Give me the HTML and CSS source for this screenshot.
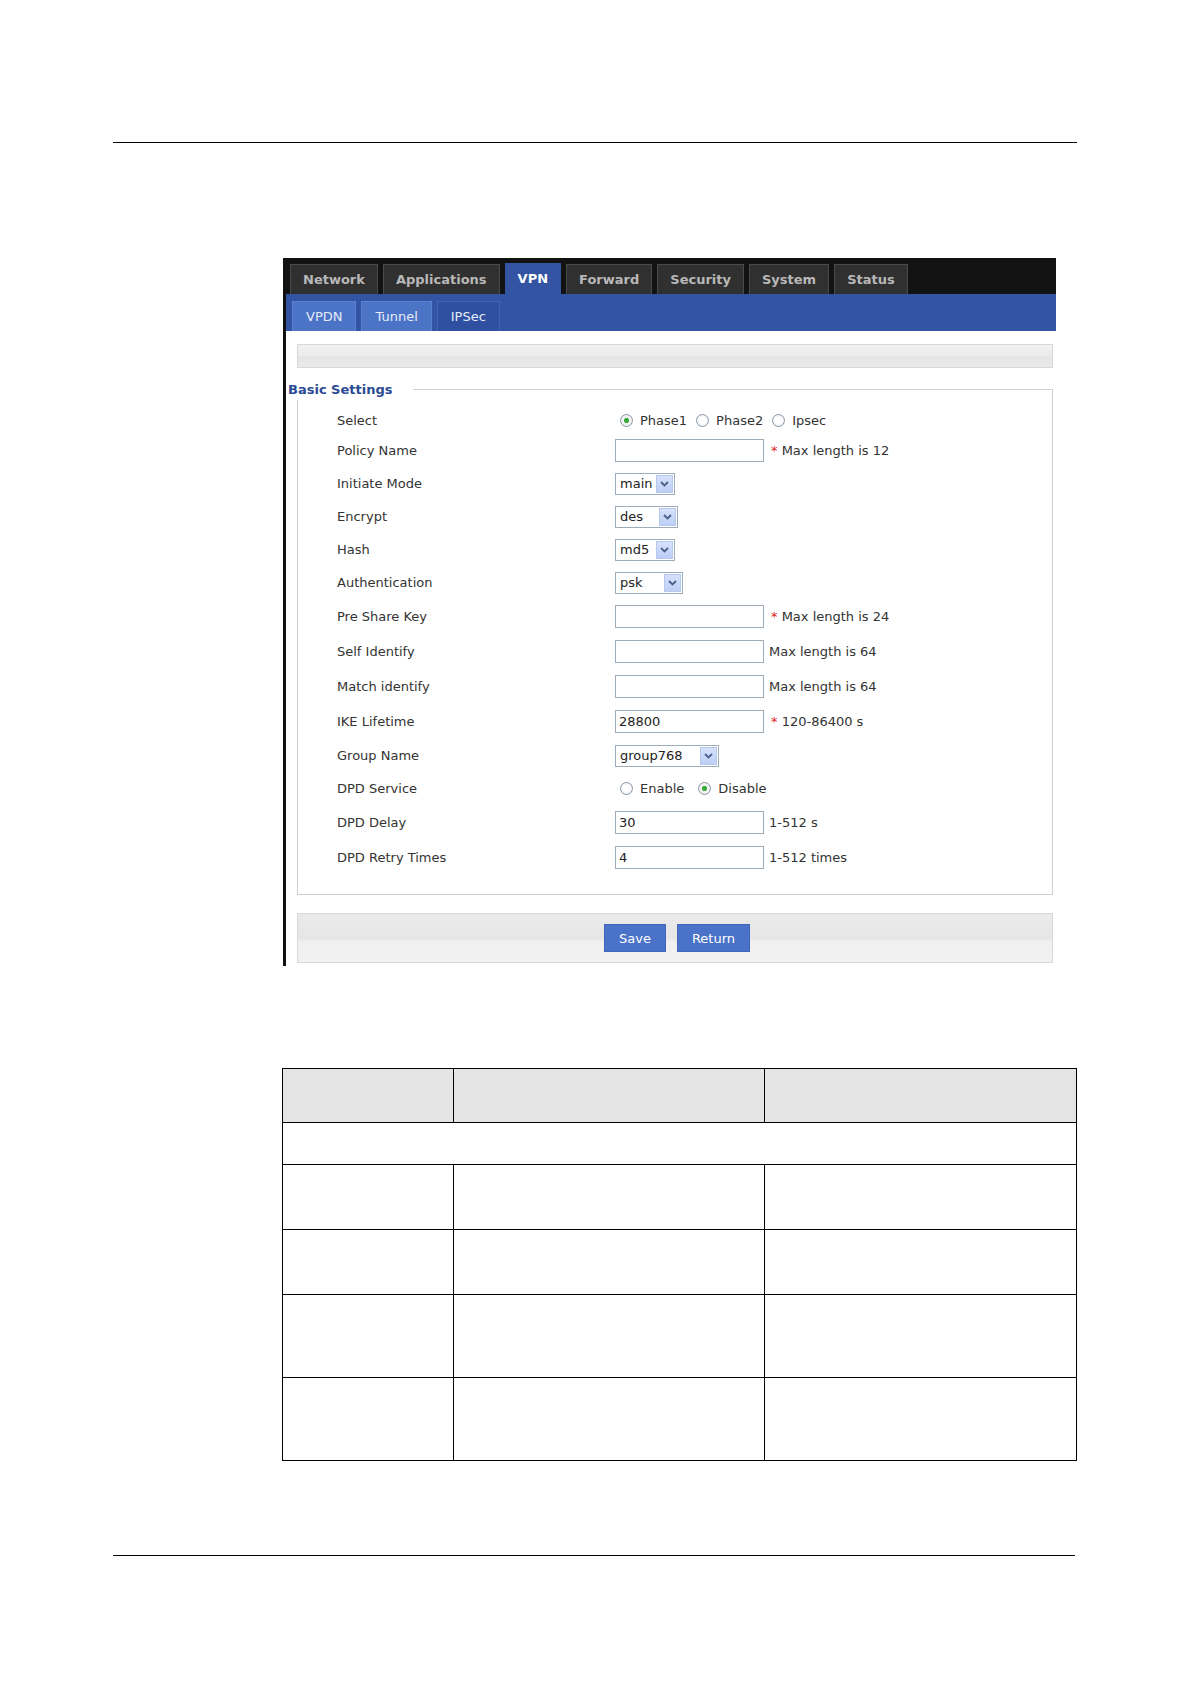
FILE: index.html
```html
<!DOCTYPE html>
<html lang="en">
<head>
  <meta charset="UTF-8">
  <title>IPSec Phase1 – Basic Settings</title>
  <link rel="stylesheet" href="styles.css">
</head>
<body>
  <div class="page">
    <div class="rule"></div>

    <div class="panel">
      <div class="topnav">
        <span class="tab">Network</span>
        <span class="tab">Applications</span>
        <span class="tab active">VPN</span>
        <span class="tab">Forward</span>
        <span class="tab">Security</span>
        <span class="tab">System</span>
        <span class="tab">Status</span>
      </div>
      <div class="subnav">
        <span class="subtab">VPDN</span>
        <span class="subtab">Tunnel</span>
        <span class="subtab active">IPSec</span>
      </div>

      <div class="content">
        <div class="bar"></div>

        <div class="fs">
          <div class="fs-head">
            <span class="fs-title">Basic Settings</span>
            <span class="fs-line"></span>
          </div>
          <div class="fs-body">
            <div class="row first">
              <span class="label">Select</span>
              <span class="ctrl">
                <label class="opt"><span class="radio on"></span>Phase1</label>
                <label class="opt"><span class="radio"></span>Phase2</label>
                <label class="opt"><span class="radio"></span>Ipsec</label>
              </span>
            </div>
            <div class="row short">
              <span class="label">Policy Name</span>
              <span class="ctrl">
                <span class="input"></span>
                <span class="hint"><span class="req">*</span> Max length is 12</span>
              </span>
            </div>
            <div class="row short">
              <span class="label">Initiate Mode</span>
              <span class="ctrl">
                <span class="select w60"><span class="val">main</span><span class="drop"><svg width="9" height="6" viewBox="0 0 9 6"><path d="M1 1l3.5 3.5L8 1" fill="none" stroke="#4a5f8a" stroke-width="1.8"/></svg></span></span>
              </span>
            </div>
            <div class="row short">
              <span class="label">Encrypt</span>
              <span class="ctrl">
                <span class="select w63"><span class="val">des</span><span class="drop"><svg width="9" height="6" viewBox="0 0 9 6"><path d="M1 1l3.5 3.5L8 1" fill="none" stroke="#4a5f8a" stroke-width="1.8"/></svg></span></span>
              </span>
            </div>
            <div class="row short">
              <span class="label">Hash</span>
              <span class="ctrl">
                <span class="select w60"><span class="val">md5</span><span class="drop"><svg width="9" height="6" viewBox="0 0 9 6"><path d="M1 1l3.5 3.5L8 1" fill="none" stroke="#4a5f8a" stroke-width="1.8"/></svg></span></span>
              </span>
            </div>
            <div class="row short">
              <span class="label">Authentication</span>
              <span class="ctrl">
                <span class="select w68"><span class="val">psk</span><span class="drop"><svg width="9" height="6" viewBox="0 0 9 6"><path d="M1 1l3.5 3.5L8 1" fill="none" stroke="#4a5f8a" stroke-width="1.8"/></svg></span></span>
              </span>
            </div>
            <div class="row">
              <span class="label">Pre Share Key</span>
              <span class="ctrl">
                <span class="input"></span>
                <span class="hint"><span class="req">*</span> Max length is 24</span>
              </span>
            </div>
            <div class="row">
              <span class="label">Self Identify</span>
              <span class="ctrl">
                <span class="input"></span>
                <span class="hint">Max length is 64</span>
              </span>
            </div>
            <div class="row">
              <span class="label">Match identify</span>
              <span class="ctrl">
                <span class="input"></span>
                <span class="hint">Max length is 64</span>
              </span>
            </div>
            <div class="row">
              <span class="label">IKE Lifetime</span>
              <span class="ctrl">
                <span class="input">28800</span>
                <span class="hint"><span class="req">*</span> 120-86400 s</span>
              </span>
            </div>
            <div class="row short">
              <span class="label">Group Name</span>
              <span class="ctrl">
                <span class="select w104"><span class="val">group768</span><span class="drop"><svg width="9" height="6" viewBox="0 0 9 6"><path d="M1 1l3.5 3.5L8 1" fill="none" stroke="#4a5f8a" stroke-width="1.8"/></svg></span></span>
              </span>
            </div>
            <div class="row short">
              <span class="label">DPD Service</span>
              <span class="ctrl wide">
                <label class="opt"><span class="radio"></span>Enable</label>
                <label class="opt"><span class="radio on"></span>Disable</label>
              </span>
            </div>
            <div class="row">
              <span class="label">DPD Delay</span>
              <span class="ctrl">
                <span class="input">30</span>
                <span class="hint">1-512 s</span>
              </span>
            </div>
            <div class="row">
              <span class="label">DPD Retry Times</span>
              <span class="ctrl">
                <span class="input">4</span>
                <span class="hint">1-512 times</span>
              </span>
            </div>
          </div>
        </div>

        <div class="actions">
          <button class="btn">Save</button>
          <button class="btn">Return</button>
        </div>
      </div>
    </div>

    <table class="doc-table">
      <colgroup>
        <col class="c1">
        <col class="c2">
        <col class="c3">
      </colgroup>
      <tr class="t-head"><td></td><td></td><td></td></tr>
      <tr class="t-group"><td colspan="3"></td></tr>
      <tr class="t-row"><td></td><td></td><td></td></tr>
      <tr class="t-row"><td></td><td></td><td></td></tr>
      <tr class="t-row tall"><td></td><td></td><td></td></tr>
      <tr class="t-row tall"><td></td><td></td><td></td></tr>
    </table>

    <div class="rule bottom"></div>
  </div>
</body>
</html>
```

FILE: styles.css
```css
body {
  margin: 0;
  font-family: "DejaVu Sans", Verdana, sans-serif;
  background: #fff;
  color: #333;
}

.page {
  width: 964px;
  margin-left: 113px;
  padding-top: 142px;
}

.rule {
  border-top: 1px solid #000;
}

.rule.bottom {
  margin-top: 94px;
  width: 962px;
}

/* router panel */
.panel {
  margin: 115px 0 0 170px;
  width: 770px;
  border-left: 3px solid #111;
}

.topnav {
  display: flex;
  align-items: flex-end;
  gap: 5px;
  height: 36px;
  padding-left: 4px;
  background: #121212;
}

.tab {
  height: 29px;
  line-height: 29px;
  padding: 0 12px;
  background: #303030;
  border: 1px solid #4a4a4a;
  border-bottom: none;
  color: #b8b8b8;
  font-size: 13px;
  font-weight: bold;
}

.tab.active {
  height: 30px;
  line-height: 30px;
  background: #3354a2;
  border-color: #3354a2;
  color: #fff;
}

.subnav {
  display: flex;
  align-items: flex-end;
  gap: 5px;
  height: 37px;
  padding-left: 6px;
  background: #3354a2;
}

.subtab {
  height: 29px;
  line-height: 29px;
  padding: 0 13px;
  background: #4b73c6;
  border: 1px solid #5c83d3;
  border-bottom: none;
  color: #e6ecf8;
  font-size: 13px;
}

.subtab.active {
  background: #2f50a0;
  border-color: #4163b4;
}

.content {
  padding: 13px 3px 3px 11px;
  background: #fff;
}

.bar {
  height: 22px;
  border: 1px solid #d8d8d8;
  background: linear-gradient(#f1f1f1 0, #ececec 50%, #e5e5e5 50%, #e9e9e9 100%);
}

/* fieldset */
.fs {
  margin-top: 12px;
}

.fs-head {
  display: flex;
  align-items: center;
  height: 20px;
}

.fs-title {
  margin-left: -9px;
  font-size: 13px;
  font-weight: bold;
  line-height: 20px;
  color: #2a4b94;
}

.fs-line {
  flex: 1;
  align-self: flex-end;
  height: 10px;
  margin-left: 21px;
  border-top: 1px solid #cfcfcf;
  border-right: 1px solid #cfcfcf;
}

.fs-body {
  border: 1px solid #cfcfcf;
  border-top: none;
  padding: 7px 0 19px 39px;
}

.row {
  display: flex;
  align-items: center;
  height: 35px;
}

.row.short { height: 33px; }
.row.first { height: 27px; }

.label {
  width: 278px;
  flex-shrink: 0;
  font-size: 13px;
  color: #333;
}

.ctrl {
  display: flex;
  align-items: center;
  font-size: 13px;
  color: #333;
}

.input {
  box-sizing: border-box;
  width: 149px;
  height: 23px;
  line-height: 21px;
  padding-left: 3px;
  border: 1px solid #9eabb9;
  background: #fff;
  color: #222;
}

.hint {
  margin-left: 5px;
}

.req {
  margin-left: 2px;
  color: #e11d1d;
}

.select {
  display: inline-flex;
  align-items: center;
  box-sizing: border-box;
  height: 22px;
  padding: 1px;
  border: 1px solid #9eabb9;
  background: #fff;
}

.select .val {
  flex: 1;
  padding-left: 3px;
  line-height: 18px;
  color: #222;
}

.select .drop {
  display: flex;
  align-items: center;
  justify-content: center;
  box-sizing: border-box;
  width: 17px;
  height: 18px;
  border: 1px solid #b6c8ee;
  background: linear-gradient(#d6e1fb, #bccff6);
}

.w60 { width: 60px; }
.w63 { width: 63px; }
.w68 { width: 68px; }
.w104 { width: 104px; }

.opt {
  display: inline-flex;
  align-items: center;
  margin-right: 4px;
}

.ctrl.wide .opt {
  margin-right: 9px;
}

.radio {
  box-sizing: border-box;
  width: 13px;
  height: 13px;
  margin: 0 7px 0 5px;
  border: 1px solid #8a97a6;
  border-radius: 50%;
  background: radial-gradient(circle, #fff 40%, #e3e6ea 100%);
}

.radio.on {
  background: radial-gradient(circle, #3daa3d 0, #3daa3d 2.2px, #f6f6f6 3px, #e3e6ea 100%);
}

.actions {
  display: flex;
  justify-content: center;
  align-items: center;
  gap: 11px;
  height: 48px;
  margin-top: 18px;
  padding-left: 4px;
  border: 1px solid #d8d8d8;
  background: linear-gradient(#eaeaea 0, #e6e6e6 52%, #f0f0f0 58%, #f1f1f1 100%);
}

.btn {
  height: 28px;
  padding: 0 14px;
  border: 1px solid #3f66b8;
  background: #4a72c8;
  color: #fff;
  font-family: "DejaVu Sans", Verdana, sans-serif;
  font-size: 13px;
}

/* document table */
.doc-table {
  margin: 102px 0 0 169px;
  width: 795px;
  border-collapse: collapse;
}

.doc-table td {
  border: 1px solid #000;
  padding: 0;
}

.c1 { width: 171px; }
.c2 { width: 311px; }

.t-head { height: 54px; }
.t-head td { background: #e4e4e4; }
.t-group { height: 42px; }
.t-row { height: 65px; }
.t-row.tall { height: 83px; }
```
